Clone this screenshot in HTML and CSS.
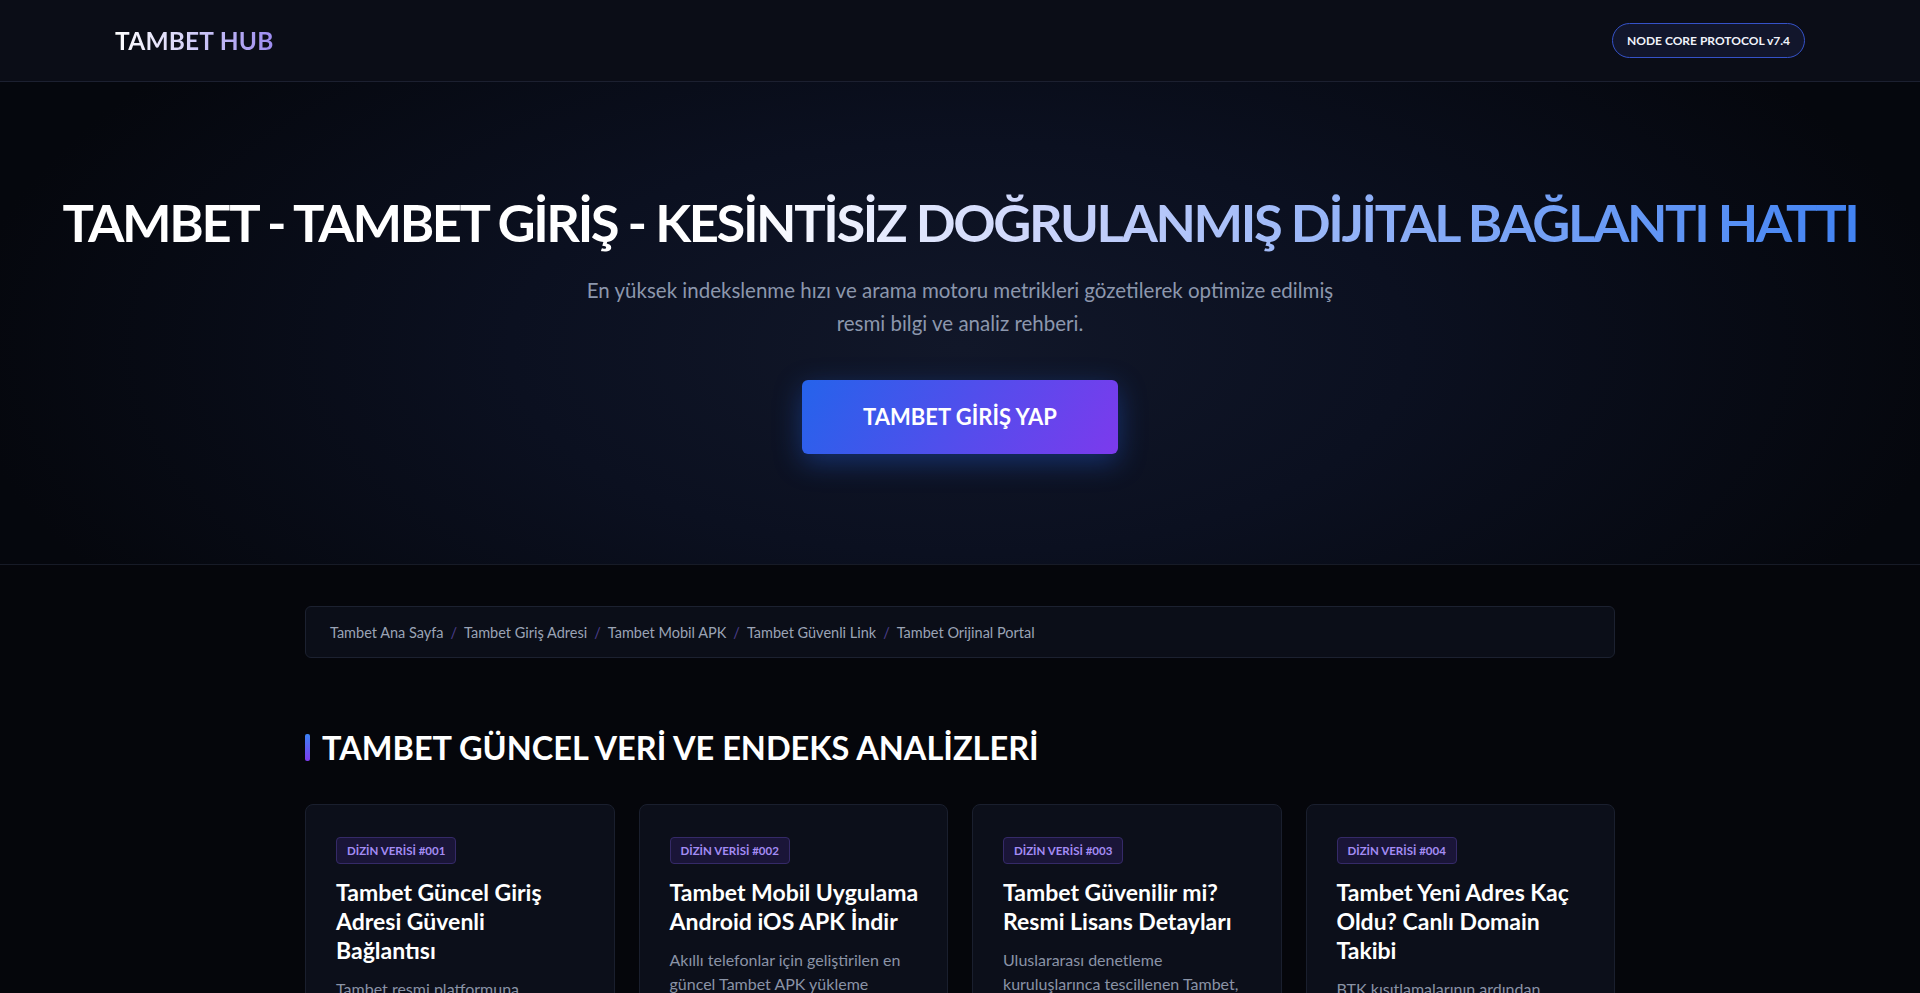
FILE: index.html
```html
<!DOCTYPE html>
<html lang="tr">
<head>
<meta charset="utf-8">
<title>Tambet Hub</title>
<link rel="stylesheet" href="styles.css">
</head>
<body>
<header class="topbar">
  <div class="brand">TAMBET <span class="brand-hub">HUB</span></div>
  <div class="badge">NODE CORE PROTOCOL v7.4</div>
</header>

<section class="hero">
  <h1 class="hero-title">TAMBET - TAMBET GİRİŞ - KESİNTİSİZ DOĞRULANMIŞ DİJİTAL BAĞLANTI HATTI</h1>
  <p class="hero-sub">En yüksek indekslenme hızı ve arama motoru metrikleri gözetilerek optimize edilmiş resmi bilgi ve analiz rehberi.</p>
  <a class="cta" href="#">TAMBET GİRİŞ YAP</a>
</section>

<main class="container">
  <nav class="crumbs">
    <a href="#">Tambet Ana Sayfa</a><span class="sep">/</span>
    <a href="#">Tambet Giriş Adresi</a><span class="sep">/</span>
    <a href="#">Tambet Mobil APK</a><span class="sep">/</span>
    <a href="#">Tambet Güvenli Link</a><span class="sep">/</span>
    <a href="#">Tambet Orijinal Portal</a>
  </nav>

  <h2 class="section-title">TAMBET GÜNCEL VERİ VE ENDEKS ANALİZLERİ</h2>

  <div class="cards">
    <article class="card">
      <span class="tag">DİZİN VERİSİ #001</span>
      <h3 class="card-title">Tambet Güncel Giriş Adresi Güvenli Bağlantısı</h3>
      <p class="card-text">Tambet resmi platformuna bağlanabilmek için doğrulanmış güncel erişim bilgileri.</p>
    </article>
    <article class="card">
      <span class="tag">DİZİN VERİSİ #002</span>
      <h3 class="card-title">Tambet Mobil Uygulama Android iOS APK İndir</h3>
      <p class="card-text">Akıllı telefonlar için geliştirilen en güncel Tambet APK yükleme adımları ve kurulum rehberi.</p>
    </article>
    <article class="card">
      <span class="tag">DİZİN VERİSİ #003</span>
      <h3 class="card-title">Tambet Güvenilir mi? Resmi Lisans Detayları</h3>
      <p class="card-text">Uluslararası denetleme kuruluşlarınca tescillenen Tambet, lisans ve güvenlik bilgileri.</p>
    </article>
    <article class="card">
      <span class="tag">DİZİN VERİSİ #004</span>
      <h3 class="card-title">Tambet Yeni Adres Kaç Oldu? Canlı Domain Takibi</h3>
      <p class="card-text">BTK kısıtlamalarının ardından güncellenen yeni giriş adresi anlık olarak takip edilir.</p>
    </article>
  </div>
</main>
</body>
</html>
```
FILE: styles.css
```css
* { box-sizing: border-box; }
html, body { margin: 0; padding: 0; }
body {
  background: #05060b;
  color: #e5e7eb;
  font-family: Lato, "Noto Sans", "Liberation Sans", sans-serif;
}
a { text-decoration: none; color: inherit; }

.topbar {
  height: 82px;
  display: flex;
  align-items: center;
  justify-content: space-between;
  padding: 0 115px;
  background: #0b0d17;
  border-bottom: 1px solid #1c2030;
}
.brand {
  font-size: 24.5px;
  font-weight: 700;
  letter-spacing: 0.2px;
  background: linear-gradient(90deg, #ffffff 0%, #d6d2f8 45%, #9d8cf0 100%);
  -webkit-background-clip: text;
  background-clip: text;
  color: transparent;
}
.badge {
  height: 35px;
  display: flex;
  align-items: center;
  padding: 0 14px;
  border: 1px solid #3552c8;
  border-radius: 18px;
  background: #12162c;
  color: #f1f3fb;
  font-size: 12px;
  font-weight: 700;
}

.hero {
  padding: 105px 20px 110px;
  text-align: center;
  background: radial-gradient(ellipse 52% 95% at 50% 55%, #111729 0%, #0b1020 45%, #05070d 100%);
  border-bottom: 1px solid #171b27;
}
.hero-title {
  margin: 0;
  font-size: 52.5px;
  line-height: 70px;
  font-weight: 700;
  letter-spacing: -2.4px;
  white-space: nowrap;
  background: linear-gradient(90deg, #ffffff 0%, #ffffff 38%, #c9d3fb 55%, #8fb0f7 72%, #3b7ff2 100%);
  -webkit-background-clip: text;
  background-clip: text;
  color: transparent;
}
.hero-sub {
  margin: 17px auto 0;
  max-width: 770px;
  font-size: 20.5px;
  line-height: 33px;
  color: #8c97ad;
}
.cta {
  display: inline-block;
  margin-top: 40px;
  width: 316px;
  height: 74px;
  line-height: 74px;
  border-radius: 6px;
  background: linear-gradient(120deg, #2563eb 0%, #7c3aed 100%);
  color: #fff;
  font-size: 22px;
  font-weight: 700;
  box-shadow: 0 8px 28px rgba(37, 99, 235, 0.38);
}

.container {
  width: 1310px;
  margin: 0 auto;
  padding-top: 41px;
}
.crumbs {
  height: 52px;
  display: flex;
  align-items: center;
  padding: 0 24px;
  background: #0b0e18;
  border: 1px solid #1c2130;
  border-radius: 6px;
  font-size: 14.5px;
  color: #9aa3b5;
}
.crumbs .sep {
  color: #4b3f8e;
  margin: 0 7px;
}
.section-title {
  display: flex;
  align-items: center;
  gap: 12px;
  margin: 68px 0 35px;
  font-size: 32.5px;
  line-height: 43px;
  font-weight: 700;
  color: #ffffff;
}
.section-title::before {
  content: "";
  width: 5px;
  height: 27px;
  border-radius: 2px;
  background: linear-gradient(180deg, #3b82f6, #7c3aed);
}
.cards {
  display: grid;
  grid-template-columns: repeat(4, 1fr);
  gap: 24px;
}
.card {
  background: #0c0f1a;
  border: 1px solid #1a1f2e;
  border-radius: 8px;
  padding: 32px 26px 30px 30px;
}
.tag {
  display: inline-block;
  height: 27px;
  line-height: 25px;
  padding: 0 10px;
  border: 1px solid #352a68;
  border-radius: 4px;
  background: #1a1538;
  color: #a48cf4;
  font-size: 11.5px;
  font-weight: 700;
}
.card-title {
  margin: 14px 0 12px;
  font-size: 23px;
  line-height: 29px;
  font-weight: 700;
  color: #ffffff;
}
.card-text {
  margin: 0;
  font-size: 16px;
  line-height: 24px;
  color: #8a93a6;
}
```
